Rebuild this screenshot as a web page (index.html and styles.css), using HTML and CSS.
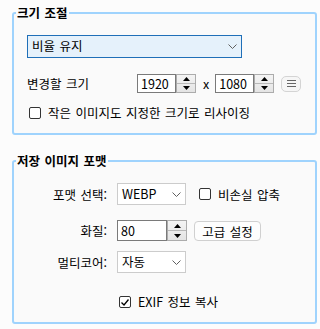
FILE: index.html
```html
<!DOCTYPE html>
<html lang="ko">
<head>
    <meta charset="UTF-8">
    <title>이미지 설정</title>
    <link rel="stylesheet" href="styles.css">
</head>
<body>

<fieldset class="group">
    <legend>크기 조절</legend>
    <div class="group-body resize-body">
        <div class="select wide">
            <span>비율 유지</span>
            <svg class="chevron" width="9" height="5" viewBox="0 0 9 5"><polyline points="0.5,0.5 4.5,4.5 8.5,0.5"/></svg>
        </div>

        <div class="size-row">
            <span class="size-label">변경할 크기</span>
            <input class="num" type="text" value="1920">
            <div class="spin">
                <div class="spin-half"><svg width="7" height="4" viewBox="0 0 7 4"><polygon points="3.5,0 7,4 0,4"/></svg></div>
                <div class="spin-half"><svg width="7" height="4" viewBox="0 0 7 4"><polygon points="0,0 7,0 3.5,4"/></svg></div>
            </div>
            <span class="times">x</span>
            <input class="num" type="text" value="1080">
            <div class="spin">
                <div class="spin-half"><svg width="7" height="4" viewBox="0 0 7 4"><polygon points="3.5,0 7,4 0,4"/></svg></div>
                <div class="spin-half"><svg width="7" height="4" viewBox="0 0 7 4"><polygon points="0,0 7,0 3.5,4"/></svg></div>
            </div>
            <button class="menu-btn" type="button">
                <span></span><span></span><span></span>
            </button>
        </div>

        <label class="check-row small-check">
            <span class="box"></span>
            <span>작은 이미지도 지정한 크기로 리사이징</span>
        </label>
    </div>
</fieldset>

<fieldset class="group format-group">
    <legend>저장 이미지 포맷</legend>
    <div class="group-body format-body">
        <div class="row format-row">
            <span class="row-label">포맷 선택:</span>
            <div class="select short">
                <span>WEBP</span>
                <svg class="chevron" width="9" height="5" viewBox="0 0 9 5"><polyline points="0.5,0.5 4.5,4.5 8.5,0.5"/></svg>
            </div>
            <label class="check-row lossless">
                <span class="box"></span>
                <span>비손실 압축</span>
            </label>
        </div>

        <div class="row quality-row">
            <span class="row-label">화질:</span>
            <input class="num quality" type="text" value="80">
            <div class="spin tall">
                <div class="spin-half"><svg width="7" height="4" viewBox="0 0 7 4"><polygon points="3.5,0 7,4 0,4"/></svg></div>
                <div class="spin-half"><svg width="7" height="4" viewBox="0 0 7 4"><polygon points="0,0 7,0 3.5,4"/></svg></div>
            </div>
            <button class="plain-btn" type="button">고급 설정</button>
        </div>

        <div class="row core-row">
            <span class="row-label">멀티코어:</span>
            <div class="select short">
                <span>자동</span>
                <svg class="chevron" width="9" height="5" viewBox="0 0 9 5"><polyline points="0.5,0.5 4.5,4.5 8.5,0.5"/></svg>
            </div>
        </div>

        <div class="row exif-row">
            <label class="check-row">
                <span class="box checked">
                    <svg width="10" height="10" viewBox="0 0 10 10"><polyline points="1.5,5.5 4,8 8.5,2.5"/></svg>
                </span>
                <span>EXIF 정보 복사</span>
            </label>
        </div>
    </div>
</fieldset>

</body>
</html>
```

FILE: styles.css
```css
* {
    box-sizing: border-box;
}

body {
    margin: 0;
    padding: 0 3px 0 12px;
    background-color: #fcfcfc;
    color: #000;
    font-family: "Noto Sans CJK KR", "Noto Sans", sans-serif;
    font-size: 12.5px;
    word-spacing: 1px;
}

/* group boxes */
.group {
    margin: 5px 0 0;
    padding: 0;
    min-width: 0;
    border: 2px solid #9fd3fd;
    border-radius: 3px;
    background-color: #fafafa;
}

.group legend {
    margin-left: 2px;
    padding: 0 1px;
    font-weight: bold;
    line-height: 16px;
}

.format-group {
    margin-top: 18px;
}

.group-body {
    padding: 14px 13px 12px;
}

.format-body {
    padding-left: 0;
}

/* dropdowns */
.select {
    display: flex;
    align-items: center;
    justify-content: space-between;
    padding: 0 4px 0 4px;
    border: 1px solid #cccccc;
    background-color: #fff;
    line-height: 1;
}

.select.wide {
    width: 215px;
    height: 23px;
    border-color: #1f6fb8;
    background-color: #e5f1fb;
}

.select.short {
    width: 69px;
    height: 22px;
}

.chevron {
    fill: none;
    stroke: #606060;
    stroke-width: 1;
}

/* size row */
.size-row {
    display: flex;
    align-items: center;
    height: 19px;
    margin-top: 16px;
}

.size-label {
    width: 110px;
}

.num {
    width: 39px;
    height: 19px;
    margin: 0;
    padding: 0 3px;
    border: 1px solid #7a7a7a;
    border-radius: 0;
    background-color: #fff;
    color: #000;
    font-family: inherit;
    font-size: 12.5px;
    outline: none;
}

.num.quality {
    width: 50px;
    height: 21px;
}

.spin {
    display: flex;
    flex-direction: column;
    width: 20px;
    height: 19px;
    border: 1px solid #acacac;
    background: linear-gradient(#f4f4f4, #e4e4e4);
}

.spin.tall {
    height: 21px;
}

.spin-half {
    flex: 1;
    display: flex;
    align-items: center;
    justify-content: center;
}

.spin-half + .spin-half {
    border-top: 1px solid #b8b8b8;
}

.spin-half svg {
    fill: #000;
}

.times {
    margin: 0 6px 0 7px;
}

.menu-btn {
    display: flex;
    flex-direction: column;
    align-items: center;
    justify-content: center;
    gap: 2px;
    width: 20px;
    height: 16px;
    margin-left: 7px;
    padding: 0;
    border: 1px solid #d4d4d4;
    border-radius: 5px;
    background-color: #f6f6f6;
}

.menu-btn span {
    display: block;
    width: 9px;
    height: 1px;
    background-color: #666;
}

/* checkboxes */
.check-row {
    display: flex;
    align-items: center;
    height: 17px;
}

.box {
    display: flex;
    align-items: center;
    justify-content: center;
    width: 12px;
    height: 12px;
    margin-left: 2px;
    margin-right: 7px;
    border: 1px solid #333;
    border-radius: 2px;
    background-color: #fff;
}

.box svg {
    fill: none;
    stroke: #000;
    stroke-width: 1.3;
}

.small-check {
    margin-top: 11px;
}

/* format rows */
.row {
    display: flex;
    align-items: center;
}

.row-label {
    width: 93px;
    margin-right: 10px;
    text-align: right;
}

.format-row {
    height: 22px;
}

.lossless {
    margin-left: 11px;
}

.quality-row {
    height: 21px;
    margin-top: 15px;
}

.plain-btn {
    width: 67px;
    height: 20px;
    margin-left: 7px;
    padding: 0;
    border: 1px solid #d0d0d0;
    border-radius: 4px;
    background-color: #fdfdfd;
    color: #000;
    font-family: inherit;
    font-size: 12.5px;
    word-spacing: 1px;
}

.core-row {
    height: 22px;
    margin-top: 10px;
}

.exif-row {
    height: 17px;
    margin-top: 20px;
    padding-left: 103px;
}
```
